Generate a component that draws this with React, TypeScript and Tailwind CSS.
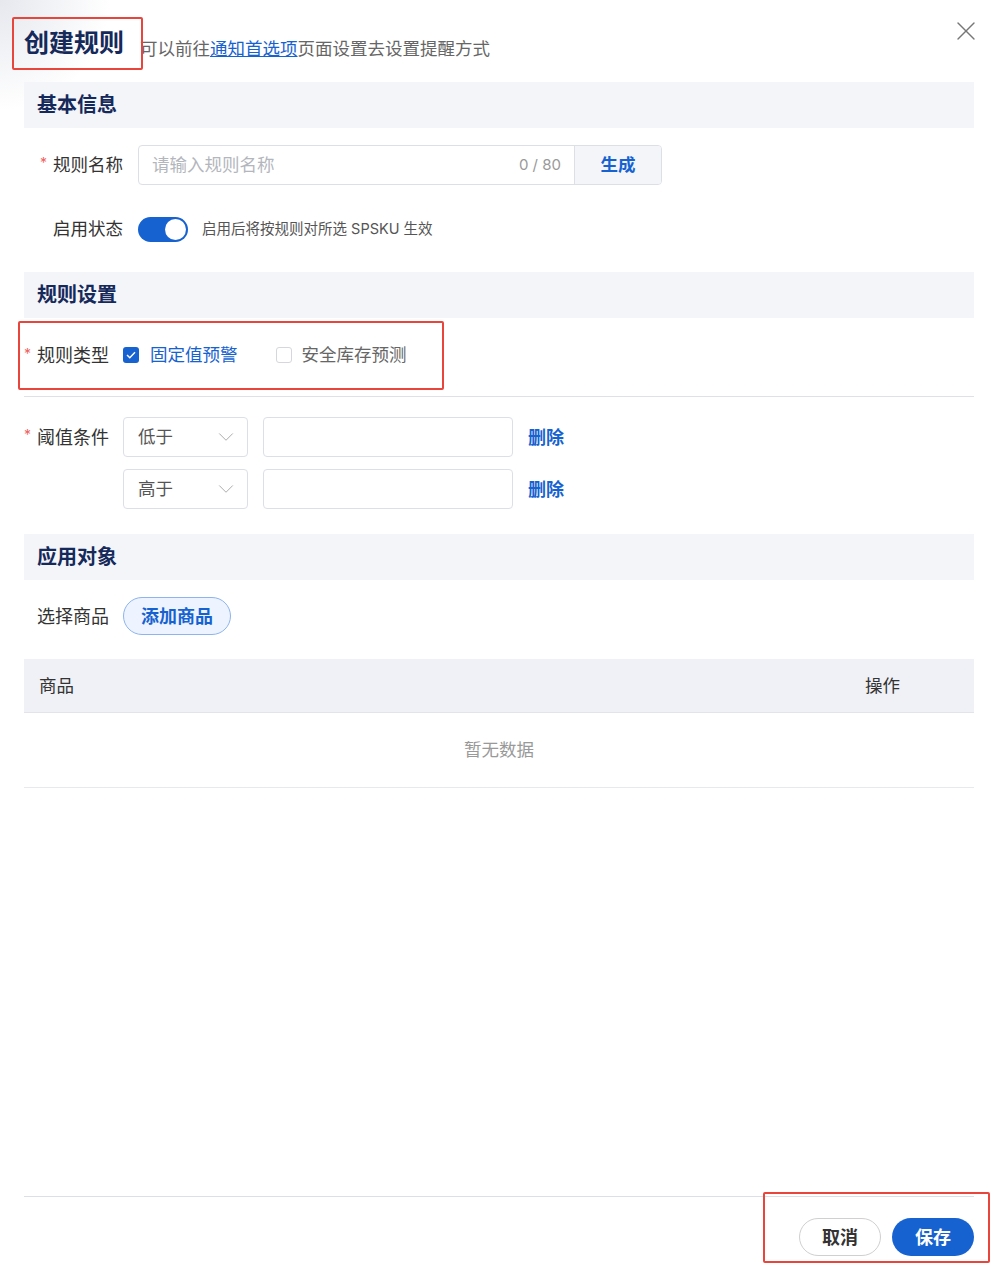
import { ChevronDown, X } from "lucide-react"

const font = "font-['Inter','Noto_Sans_CJK_SC',sans-serif]"

function SectionHeader({ title }: { title: string }) {
  return (
    <div className="h-[46px] bg-[#f4f5f9] flex items-center pl-[13px]">
      <h3 className="text-[20px] font-bold text-[#15295a] leading-none">{title}</h3>
    </div>
  )
}

function Star() {
  return <span className="text-[#f06060] text-[14px] mr-[6px] relative -top-[3px]">*</span>
}

function ThresholdRow({ op }: { op: string }) {
  return (
    <div className="flex items-center">
      <div className="w-[125px] h-10 border border-[#dcdfe6] rounded-[4px] flex items-center justify-between pl-[14px] pr-[14px] text-[#555]">
        <span>{op}</span>
        <ChevronDown size={26} strokeWidth={0.9} className="text-[#aaa] -mr-[6px]" />
      </div>
      <div className="ml-[15px] w-[250px] h-10 border border-[#dcdfe6] rounded-[4px]" />
      <button className="ml-[15px] text-[#1662d0] font-bold text-[18px]">删除</button>
    </div>
  )
}

export default function App() {
  return (
    <div className={`${font} relative h-[1271px] flex flex-col bg-white bg-[radial-gradient(circle_at_0_0,#e6e8ee_0px,#ffffff_110px)] text-[17.5px] text-[#333] pl-6 pr-5`}>
      {/* header */}
      <div className="h-[82px] flex items-end pb-[26px]">
        <h1 className="text-[25px] font-bold text-[#15295a] leading-none">创建规则</h1>
        <p className="ml-[16px] text-[17.5px] text-[#666] leading-none relative top-[1px]">
          可以前往<a href="#" className="text-[#1662d0] underline">通知首选项</a>页面设置去设置提醒方式
        </p>
      </div>
      <button className="absolute right-[12px] top-[15px] text-[#777]">
        <X size={32} strokeWidth={1} />
      </button>

      <SectionHeader title="基本信息" />
      <div className="flex items-center mt-[17px]">
        <div className="w-[114px] pr-[15px] text-right">
          <Star />规则名称
        </div>
        <div className="flex h-10 border border-[#dcdfe6] rounded-[4px] w-[524px] overflow-hidden">
          <div className="flex-1 flex items-center justify-between pl-[13px] pr-[13px]">
            <span className="text-[#b3b6bd]">请输入规则名称</span>
            <span className="text-[15px] text-[#999]">0 / 80</span>
          </div>
          <div className="w-[87px] bg-[#f4f5f9] border-l border-[#dcdfe6] flex items-center justify-center text-[#1662d0] font-bold">生成</div>
        </div>
      </div>
      <div className="flex items-center mt-[31px]">
        <div className="w-[114px] pr-[15px] text-right">启用状态</div>
        <div className="w-[50px] h-[25px] rounded-full bg-[#1662d0] flex items-center justify-end pr-[2px]">
          <div className="w-[21px] h-[21px] rounded-full bg-white" />
        </div>
        <span className="ml-[14px] text-[14.5px] text-[#555]">启用后将按规则对所选 SPSKU 生效</span>
      </div>

      <div className="mt-[30px]">
        <SectionHeader title="规则设置" />
      </div>
      <div className="flex items-center h-[68px] mt-[3px]">
        <div className="w-[99px] text-[18px]">
          <Star />规则类型
        </div>
        <span className="w-4 h-4 rounded-[3px] bg-[#1662d0] flex items-center justify-center">
          <svg width="10" height="8" viewBox="0 0 10 8" fill="none">
            <path d="M1 4l2.8 2.8L9 1.2" stroke="white" strokeWidth="1.4" />
          </svg>
        </span>
        <span className="ml-[11px] text-[#1662d0]">固定值预警</span>
        <span className="ml-[38px] w-4 h-4 rounded-[3px] border border-[#d5d7dc]" />
        <span className="ml-[10px] text-[#666]">安全库存预测</span>
      </div>
      <div className="mt-[7px] border-t border-[#dfe1e6]" />

      <div className="flex mt-[20px]">
        <div className="w-[99px] h-10 flex items-center text-[18px]">
          <Star />阈值条件
        </div>
        <div className="flex flex-col gap-[12px]">
          <ThresholdRow op="低于" />
          <ThresholdRow op="高于" />
        </div>
      </div>

      <div className="mt-[25px]">
        <SectionHeader title="应用对象" />
      </div>
      <div className="flex items-center mt-[17px]">
        <div className="w-[99px] pl-[13px] text-[18px]">选择商品</div>
        <button className="h-[38px] w-[108px] rounded-full bg-[#edf4ff] border border-[#8eb3ee] text-[#1662d0] font-bold text-[18px]">添加商品</button>
      </div>

      <div className="mt-[24px]">
        <div className="h-[54px] bg-[#f0f1f6] border-b border-[#e3e4e8] flex items-center justify-between pl-[15px] pr-[74px]">
          <span>商品</span>
          <span>操作</span>
        </div>
        <div className="h-[75px] border-b border-[#e8e9ec] flex items-center justify-center text-[#999]">暂无数据</div>
      </div>

      <div className="flex-1" />
      <div className="border-t border-[#dcdfe8] pt-[21px] pb-[15px] flex justify-end gap-[11px]">
        <button className="h-[38px] w-[82px] rounded-full border border-[#d0d0d0] text-[#333] font-bold text-[18px]">取消</button>
        <button className="h-[38px] w-[82px] rounded-full bg-[#1662d0] text-white font-bold text-[18px]">保存</button>
      </div>

      {/* annotation boxes */}
      <div className="absolute left-[12px] top-[17px] w-[131px] h-[53px] border-2 border-[#e8453c] rounded-[2px] pointer-events-none" />
      <div className="absolute left-[18px] top-[321px] w-[426px] h-[69px] border-2 border-[#e8453c] rounded-[2px] pointer-events-none" />
      <div className="absolute left-[763px] top-[1192px] w-[227px] h-[71px] border-2 border-[#e8453c] rounded-[2px] pointer-events-none" />
    </div>
  )
}
